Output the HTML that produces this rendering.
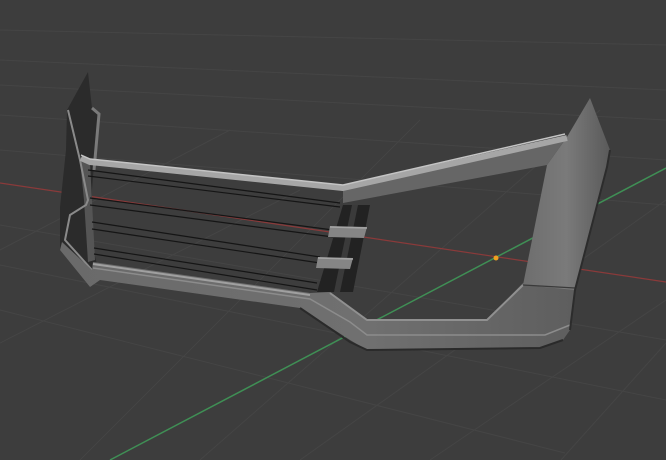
<!DOCTYPE html>
<html><head><style>html,body{margin:0;padding:0;background:#3d3d3d;}svg{display:block}</style></head>
<body>
<svg width="666" height="460" viewBox="0 0 666 460" xmlns="http://www.w3.org/2000/svg">
<defs>
<linearGradient id="pil" x1="0" x2="1" y1="0" y2="0"><stop offset="0" stop-color="#6e6e6e"/><stop offset="0.5" stop-color="#7a7a7a"/><stop offset="1" stop-color="#5a5a5a"/></linearGradient>
<linearGradient id="low" x1="0" x2="1"><stop offset="0" stop-color="#6a6a6a"/><stop offset="0.6" stop-color="#707070"/><stop offset="1" stop-color="#5e5e5e"/></linearGradient>
</defs>
<rect width="666" height="460" fill="#3d3d3d"/>
<g stroke="#454545" stroke-width="1" fill="none">
<line x1="0" y1="60" x2="666" y2="90"/>
<line x1="0" y1="85" x2="666" y2="120"/>
<line x1="0" y1="115" x2="666" y2="160"/>
<line x1="0" y1="150" x2="666" y2="205"/>
<line x1="0" y1="225" x2="666" y2="340"/>
<line x1="0" y1="265" x2="666" y2="400"/>
<line x1="0" y1="310" x2="565" y2="453"/>
<line x1="0" y1="30" x2="666" y2="45"/>
<line x1="0" y1="343" x2="300" y2="190"/>
<line x1="80" y1="460" x2="420" y2="120"/>
<line x1="561" y1="460" x2="666" y2="343"/>
<line x1="200" y1="460" x2="600" y2="110"/>
<line x1="0" y1="250" x2="230" y2="130"/>
<line x1="430" y1="460" x2="666" y2="300"/>
<line x1="300" y1="460" x2="666" y2="200"/>
</g>
<line x1="0" y1="183" x2="666" y2="282" stroke="#8a3a3a" stroke-width="1.2"/>
<line x1="110" y1="460" x2="666" y2="168" stroke="#3f8f55" stroke-width="1.5"/>
<polygon points="67,110 88,72 92,108 98,112 92,190 92,245 98,268 90,287 60,250 60,207 66,150" fill="#2b2b2b"/>
<polygon points="80,160 90,162 95,260 88,262 84,200" fill="#555"/>
<polyline points="68,110 80,160 88,200 86,205 70,215 65,240 92,270" fill="none" stroke="#8a8a8a" stroke-width="2"/>
<polyline points="92,108 99,114 94,170" fill="none" stroke="#7a7a7a" stroke-width="3"/>
<g fill="none" stroke="#151515" stroke-width="1.2">
<polyline points="88,170 340,203"/>
<polyline points="88,176 340,207"/>
<polyline points="90,198 333,230"/>
<polyline points="90,205 333,237"/>
<polyline points="92,222 320,257"/>
<polyline points="92,229 320,263"/>
<polyline points="94,248 317,283"/>
<polyline points="94,254 317,290"/>
</g>
<polygon points="343,205 370,205 353,292 317,292" fill="#222"/>
<polygon points="352,205 358,205 340,292 334,292" fill="#3a3a3a"/>
<polygon points="330,226 367,227 364,238 328,237" fill="#858585"/>
<polyline points="330,227 367,228" stroke="#a5a5a5" stroke-width="1.5"/>
<polygon points="318,257 353,258 350,269 316,268" fill="#858585"/>
<polyline points="318,258 353,259" stroke="#a5a5a5" stroke-width="1.5"/>
<polygon points="93,262 310,293 330,292 367,320 487,320 523,283 575,288 573,303 570,330 563,340 540,348 367,350 350,340 300,308 100,280 90,287 60,250 62,242 92,270" fill="url(#low)"/>
<polyline points="93,264 310,295" fill="none" stroke="#a0a0a0" stroke-width="2"/>
<polyline points="93,268 310,299 350,322 367,335 545,335 570,325" fill="none" stroke="#8c8c8c" stroke-width="1.5"/>
<polyline points="330,293 367,320 487,320 523,285" fill="none" stroke="#909090" stroke-width="2"/>
<polyline points="300,308 350,342 367,350 540,348 563,340" fill="none" stroke="#2a2a2a" stroke-width="2"/>
<polygon points="567,137 590,98 610,150 607,167 575,290 523,285 547,165" fill="url(#pil)"/>
<polyline points="523,285 575,288" stroke="#3a3a3a" stroke-width="1.2" fill="none"/>
<polyline points="610,150 607,167 575,290 570,330" stroke="#2c2c2c" stroke-width="2" fill="none"/>
<polygon points="343,187 567,137 547,165 343,203" fill="#666"/>
<polyline points="81,158 90,162 343,188 567,138" fill="none" stroke="#a6a6a6" stroke-width="6" stroke-linejoin="round"/>
<polyline points="81,155 90,159 343,185 565,134" fill="none" stroke="#c4c4c4" stroke-width="1.5"/>
<circle cx="496" cy="258" r="2.5" fill="#f0a020"/>
</svg>
</body></html>
